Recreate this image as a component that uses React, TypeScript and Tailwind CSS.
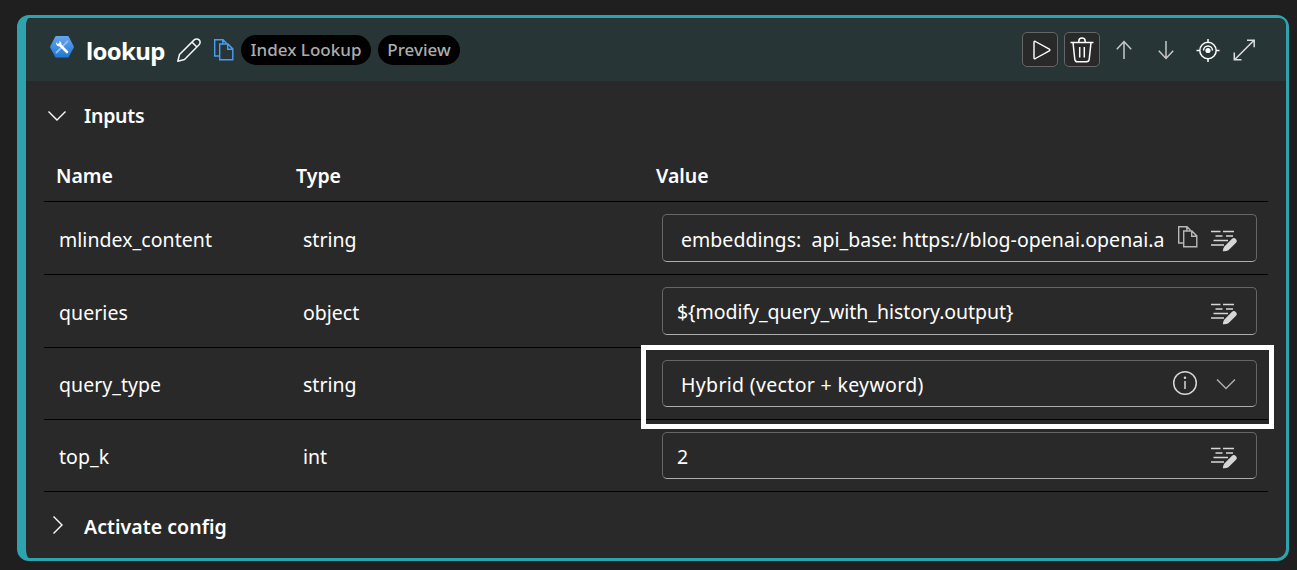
import type { ReactNode } from "react";

function ToolLogo() {
  return (
    <svg className="mt-[18px] ml-6 h-6 w-6 shrink-0" viewBox="0 0 24 24">
      <defs>
        <linearGradient id="hex" x1="0" y1="0" x2="0" y2="1">
          <stop offset="0" stopColor="#68a5ee" />
          <stop offset="1" stopColor="#1e78d4" />
        </linearGradient>
      </defs>
      <path d="M6.3 0h11.4q.7 0 1 .6l5 9.600q.4.8 0 1.500l-5 9.300q-.3.600-1 .600H6.300q-.700 0-1-.600l-5-9.300q-.400-.700 0-1.500l5-9.600q.300-.600 1-.600z" fill="url(#hex)" />
      <path d="M17.500 5.300 6.500 16.500" stroke="#8fbdf0" strokeWidth="1.800" strokeLinecap="round" />
      <path d="M9.500 8.500 17 16" stroke="#fff" strokeWidth="2.600" strokeLinecap="round" />
      <path d="M6.100 6.300a3.100 3.100 0 0 0 4.800 3.400 3.100 3.100 0 0 0-1.800-4.800L9.500 7 8 8z" fill="#fff" />
    </svg>
  );
}

function Pencil() {
  return (
    <svg className="mt-5 ml-[13px] h-6 w-6 shrink-0" viewBox="0 0 24 24" fill="none" stroke="#f5f5f5" strokeWidth="1.500" strokeLinejoin="round">
      <path d="M.8 23.200 2.500 16.500 17.200 1.900a3.450 3.450 0 0 1 4.900 4.900L7.500 21.500zM15 4.100l4.900 4.900" />
    </svg>
  );
}

function Copy({ className }: { className: string }) {
  return (
    <svg className={className} viewBox="0 0 20 22" fill="none" stroke="currentColor" strokeWidth="1.400">
      <path d="M5.500 17H.7V.7h8.300l3.500 3.500M5.700 5h8.200l4.900 4.900v10.900H5.700zM13.700 5v5.200h5.100M8.800.9v3.500" />
    </svg>
  );
}

function EditLines() {
  return (
    <svg className="h-[22px] w-[27px] shrink-0" viewBox="0 0 27 22" fill="none" stroke="#d6d6d6" strokeWidth="1.300">
      <path d="M1 1.500h9.500M13 1.500H24M5.500 6h7M16 6h7M3.500 10.500H18M1 15h13" />
      <path d="M12.800 21.300q.2-3.300 1.600-4.800l7.400-7.400a2.800 2.800 0 0 1 4 4l-7.400 7.100q-2 1.400-5.600 1.100z" fill="#d6d6d6" stroke="none" />
    </svg>
  );
}

function Pill({ children, className }: { children: ReactNode; className: string }) {
  return (
    <span className={`mt-[17px] flex h-[30px] shrink-0 items-center justify-center rounded-full bg-black text-[17px] font-medium whitespace-nowrap text-[#adadad] ${className}`}>
      {children}
    </span>
  );
}

function Header() {
  return (
    <header className="flex h-[63px] shrink-0 items-start rounded-t-[7px] bg-[#283536]">
      <ToolLogo />
      <h1 className="mt-4 ml-3 w-[78px] text-[24px] leading-[33px] font-bold tracking-[-0.700px] whitespace-nowrap">lookup</h1>
      <Pencil />
      <Copy className="mt-[21px] ml-[13px] h-[22px] w-5 shrink-0 text-[#479ef5]" />
      <Pill className="ml-[7px] w-[130px]">Index Lookup</Pill>
      <Pill className="ml-[7px] w-[82px]">Preview</Pill>
      <div className="mt-[14px] mr-[30px] ml-auto flex items-center">
        <button className="flex h-[35px] w-9 items-center justify-center rounded-[5px] border border-[#666] bg-[#292929]">
          <svg className="ml-1 h-5 w-[18px]" viewBox="0 0 18 20" fill="none" stroke="#fff" strokeWidth="1.400">
            <path d="M1 2.300v15.400q0 1.500 1.400.8L16.300 10.900q1.200-.9 0-1.800L2.400 1.500Q1 .8 1 2.300z" />
          </svg>
        </button>
        <button className="ml-[6px] flex h-[35px] w-9 items-center justify-center rounded-[5px] border border-[#666] bg-[#292929]">
          <svg className="h-[26px] w-6" viewBox="0 0 24 26" fill="none" stroke="#fff" strokeWidth="1.500">
            <path d="M.5 5.500h23M8.800 5.500V4.300a3.200 3.200 0 0 1 6.400 0v1.200M3 5.500l1.800 16.800q.3 2.400 2.700 2.400h9q2.400 0 2.700-2.400L21 5.500M9.700 10v10.500M14.300 10v10.500" />
          </svg>
        </button>
        <svg className="ml-4 h-5 w-4" viewBox="0 0 16 20" fill="none" stroke="#c8c8c8" strokeWidth="1.500">
          <path d="M8 19V1.800M.8 9.200 8 1.600l7.200 7.600" />
        </svg>
        <svg className="ml-[26px] h-5 w-4" viewBox="0 0 16 20" fill="none" stroke="#c8c8c8" strokeWidth="1.500">
          <path d="M8 1v17.200M.8 10.800 8 18.400l7.200-7.600" />
        </svg>
        <svg className="ml-[22px] h-6 w-6" viewBox="0 0 24 24" fill="none" stroke="#fff" strokeWidth="1.500">
          <circle cx="12" cy="12.500" r="8.200" />
          <circle cx="12" cy="12.500" r="2.600" fill="#fff" stroke="none" />
          <path d="M12 1v3.500M12 20.500V24M.5 12.500H4M20 12.500h3.500M7.500 12.500a4.500 4.500 0 0 1 9 0" />
        </svg>
        <svg className="ml-[13px] h-[22px] w-[23px]" viewBox="0 0 23 22" fill="none" stroke="#ddd" strokeWidth="1.500">
          <path d="M1.800 20.500 20.800 1.500M14 1.200h7.200v7M1.300 13.500v7.200h7.200" />
        </svg>
      </div>
    </header>
  );
}

type Row = {
  name: string;
  type: string;
  value: string;
  rowClass: string;
  cellClass: string;
  boxClass: string;
  valueClass: string;
  kind: "copy" | "edit" | "select";
};

const rows: Row[] = [
  { name: "mlindex_content", type: "string", value: "embeddings:  api_base: https://blog-openai.openai.a", rowClass: "h-[73px]", cellClass: "pt-[23px]", boxClass: "h-12", valueClass: "ml-[18px] w-[490px] pt-[3px] tracking-[0.040px]", kind: "copy" },
  { name: "queries", type: "object", value: "${modify_query_with_history.output}", rowClass: "h-[73px]", cellClass: "pt-[23px]", boxClass: "h-12", valueClass: "ml-3.5 w-[500px] pt-0.5 tracking-[-0.040px]", kind: "edit" },
  { name: "query_type", type: "string", value: "Hybrid (vector + keyword)", rowClass: "h-[72px]", cellClass: "pt-[22px]", boxClass: "h-[47px]", valueClass: "ml-[18px] w-[480px] pt-0.5 tracking-[0.330px]", kind: "select" },
  { name: "top_k", type: "int", value: "2", rowClass: "h-[72px]", cellClass: "pt-[22px]", boxClass: "h-[47px]", valueClass: "ml-3.5 w-[500px] pt-0.5", kind: "edit" },
];

function InputRow({ row }: { row: Row }) {
  return (
    <div className={`relative flex items-start border-b border-black ${row.rowClass}`}>
      <div className={`w-[244px] pl-[15px] leading-[30px] tracking-[0.050px] ${row.cellClass}`}>{row.name}</div>
      <div className={`w-[374px] pl-[15px] leading-[30px] ${row.cellClass}`}>{row.type}</div>
      <div className={`mt-3 flex w-[595px] items-center rounded-[5px] border border-[#666] border-b-[#adadad] ${row.boxClass}`}>
        <div className={`shrink-0 leading-[30px] whitespace-pre ${row.valueClass}`}>{row.value}</div>
        {row.kind === "select" ? (
          <div className="mr-5 ml-auto flex items-center">
            <svg className="mb-0.5 h-[26px] w-[26px]" viewBox="0 0 26 26" fill="none" stroke="#d6d6d6" strokeWidth="1.500">
              <circle cx="13" cy="13" r="11.300" />
              <path d="M13 11v8" />
              <circle cx="13" cy="7.800" r="1.200" fill="#d6d6d6" stroke="none" />
            </svg>
            <svg className="ml-[18px] h-3 w-5" viewBox="0 0 20 12" fill="none" stroke="#adadad" strokeWidth="1.500">
              <path d="M1 1.500l9 9 9-9" />
            </svg>
          </div>
        ) : (
          <div className="mr-[19px] ml-auto flex items-center">
            {row.kind === "copy" && <Copy className="mr-3 mb-0.5 h-[22px] w-5 text-[#b8b8b8]" />}
            <div className="mt-[5px]"><EditLines /></div>
          </div>
        )}
      </div>
      {row.kind === "select" && (
        <div className="pointer-events-none absolute top-[-3px] left-[597px] h-[84px] w-[633px] border-[5px] border-white" />
      )}
    </div>
  );
}

export default function App() {
  return (
    <div className="flex h-[570px] w-[1297px] overflow-hidden bg-[#1f1f1f] pt-[15px] pl-[17px] font-['Noto_Sans','Open_Sans',sans-serif] text-[19.500px] text-white">
      <main className="flex h-[546px] w-[1272px] flex-col rounded-xl border-[3px] border-l-[9px] border-[#2ea3ae] bg-[#292929]">
        <Header />
        <div className="flex h-[69px] items-center pl-[21px]">
          <svg className="h-3 w-5" viewBox="0 0 20 12" fill="none" stroke="#fff" strokeWidth="1.400">
            <path d="M1.500 1.500 10 10l8.500-8.500" />
          </svg>
          <h2 className="ml-[17px] font-semibold tracking-[-0.250px]">Inputs</h2>
        </div>
        <section className="ml-[18px] flex w-[1224px] flex-col">
          <div className="flex h-[52px] items-center border-b border-black font-semibold">
            <div className="w-[240px] pl-3">Name</div>
            <div className="w-[360px] pl-3">Type</div>
            <div className="pl-3">Value</div>
          </div>
          {rows.map((row) => (
            <InputRow key={row.name} row={row} />
          ))}
        </section>
        <div className="flex h-[66px] items-center pl-[26px]">
          <svg className="h-5 w-3" viewBox="0 0 12 20" fill="none" stroke="#fff" strokeWidth="1.400">
            <path d="M1.500 1.500 10 10l-8.500 8.500" />
          </svg>
          <h2 className="ml-5 pt-[3px] font-semibold tracking-[0.050px]">Activate config</h2>
        </div>
      </main>
    </div>
  );
}
